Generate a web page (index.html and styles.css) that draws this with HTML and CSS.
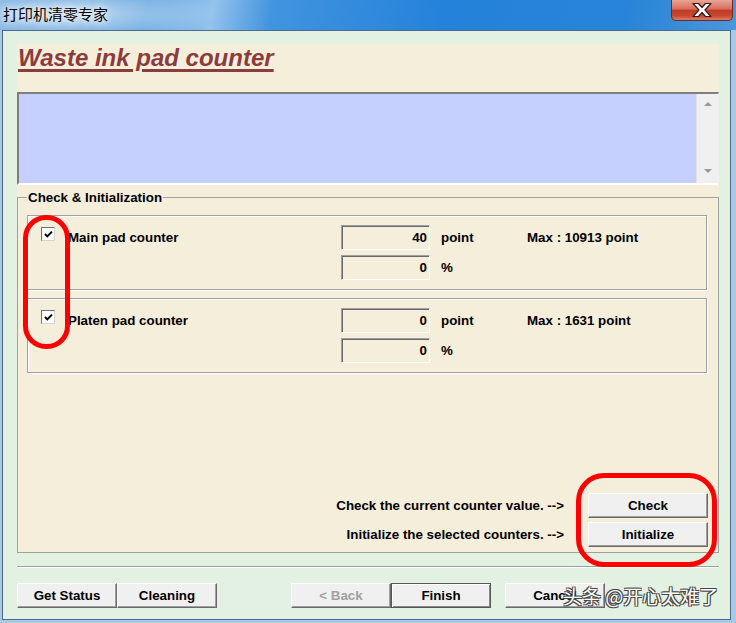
FILE: index.html
```html
<!DOCTYPE html>
<html>
<head>
  <meta charset="UTF-8">
  <title>打印机清零专家</title>
  <link rel="stylesheet" href="styles.css">
</head>
<body>
  <div class="window">
    <div class="titlebar">
      <span class="caption">打印机清零专家</span>
      <a href="javascript:;" class="close">
        <svg width="22" height="16" viewBox="0 0 22 16">
          <path d="M2 1.5 H7.5 L11 5.5 L14.5 1.5 H20 L14 8 L20 14.5 H14.5 L11 10.5 L7.5 14.5 H2 L8 8 Z" fill="#fff" stroke="#3a1a16" stroke-width="1.2" stroke-linejoin="round"/>
        </svg>
      </a>
    </div>
    <div class="client">
      <div class="page">
        <h1 class="heading">Waste ink pad counter</h1>
        <div class="log">
          <div class="log_text"></div>
          <div class="scroll">
            <span class="arrow_up"></span>
            <span class="arrow_down"></span>
          </div>
        </div>
        <fieldset class="group">
          <legend>Check &amp; Initialization</legend>
          <div class="counter">
            <span class="check"><svg width="11" height="11" viewBox="0 0 11 11"><path d="M2 5 L4.3 7.4 L9 2.6" fill="none" stroke="#000" stroke-width="2"/></svg></span>
            <span class="name">Main pad counter</span>
            <span class="field">40</span>
            <span class="unit">point</span>
            <span class="max">Max : 10913 point</span>
            <span class="field field_pct">0</span>
            <span class="unit">%</span>
          </div>
          <div class="counter">
            <span class="check"><svg width="11" height="11" viewBox="0 0 11 11"><path d="M2 5 L4.3 7.4 L9 2.6" fill="none" stroke="#000" stroke-width="2"/></svg></span>
            <span class="name">Platen pad counter</span>
            <span class="field">0</span>
            <span class="unit">point</span>
            <span class="max">Max : 1631 point</span>
            <span class="field field_pct">0</span>
            <span class="unit">%</span>
          </div>
          <div class="actions">
            <div class="action_row">
              <span>Check the current counter value. --&gt;</span>
              <a href="javascript:;" class="btn btn_side">Check</a>
            </div>
            <div class="action_row">
              <span>Initialize the selected counters. --&gt;</span>
              <a href="javascript:;" class="btn btn_side">Initialize</a>
            </div>
          </div>
        </fieldset>
      </div>
      <div class="sep"></div>
      <div class="footer">
        <a href="javascript:;" class="btn">Get Status</a>
        <a href="javascript:;" class="btn">Cleaning</a>
        <a href="javascript:;" class="btn btn_off btn_back">&lt; Back</a>
        <a href="javascript:;" class="btn btn_default">Finish</a>
        <a href="javascript:;" class="btn btn_cancel">Cancel</a>
      </div>
    </div>
    <div class="ring ring_left"></div>
    <div class="ring ring_right"></div>
    <div class="watermark">头条 @开心太难了</div>
  </div>
</body>
</html>
```

FILE: styles.css
```css
* {
  margin: 0;
  padding: 0;
}
body {
  font-family: "Liberation Sans", Arial, sans-serif;
  color: #000;
}
a {
  text-decoration: none;
  color: #000;
}
.window {
  position: relative;
  width: 736px;
  height: 623px;
  background: #aac7e5;
  overflow: hidden;
}
.titlebar {
  height: 30px;
  display: flex;
  justify-content: space-between;
  align-items: flex-start;
  background:
    radial-gradient(ellipse 150px 28px at 70px 14px, rgba(255,255,255,0.6), rgba(255,255,255,0)),
    linear-gradient(100deg, #6fa9de 0%, #62a4e0 20%, #93c2ec 29%, #4194df 37%, #2582da 60%, #2884d8 85%, #4a97db 100%);
}
.caption {
  padding-left: 3px;
  font: 15px/28px "Noto Sans CJK SC", sans-serif;
  color: #000;
  text-shadow: 0 0 6px #fff, 0 0 10px #fff;
}
.close {
  display: flex;
  align-items: center;
  justify-content: center;
  width: 62px;
  height: 21px;
  margin-right: 3px;
  box-sizing: border-box;
  border: 1px solid #6b2a22;
  border-top: none;
  border-radius: 0 0 5px 5px;
  background: linear-gradient(#e7a595 0%, #d86d5a 45%, #c23b26 52%, #c84a33 80%, #df7c5f 100%);
}
.client {
  height: 590px;
  margin: 0 5px 0 2px;
  padding: 13px 11px 0 14px;
  box-sizing: border-box;
  border: 1px solid #4a6a8e;
  background: #e3f1e3;
}
.page {
  height: 509px;
  display: flex;
  flex-direction: column;
  background: #f5eedb;
}
.heading {
  margin-bottom: 20px;
  padding-left: 1px;
  font: italic bold 24px/28px "Liberation Sans", Arial, sans-serif;
  color: #8a3d3d;
  text-decoration: underline;
  text-decoration-thickness: 3px;
  text-underline-offset: 3px;
}
.log {
  display: flex;
  height: 93px;
  box-sizing: border-box;
  border-style: solid;
  border-width: 2px 1px 2px 2px;
  border-color: #7e7e7e #f0f0f0 #fff #7e7e7e;
}
.log_text {
  flex: 1;
  background: #c6d0fe;
}
.scroll {
  width: 21px;
  display: flex;
  flex-direction: column;
  justify-content: space-between;
  align-items: center;
  padding: 8px 0 10px;
  border-left: 1px solid #e3e3e3;
  background: #f0f0f0;
}
.arrow_up {
  border-left: 4px solid transparent;
  border-right: 4px solid transparent;
  border-bottom: 4px solid #9a9a9a;
}
.arrow_down {
  border-left: 4px solid transparent;
  border-right: 4px solid transparent;
  border-top: 4px solid #9a9a9a;
}
.group {
  flex: 1;
  display: flex;
  flex-direction: column;
  min-width: 0;
  margin-top: 5px;
  padding: 10px 10px 5px 9px;
  border: 1px solid #a0a0a0;
}
.group legend {
  padding: 0 1px;
  font-size: 13.33px;
  font-weight: bold;
  line-height: 15px;
}
.counter {
  display: grid;
  grid-template-columns: 27px 273px 100px 86px 1fr;
  grid-template-rows: 25px 25px;
  row-gap: 5px;
  margin-right: 1px;
  padding: 9px 0 9px 13px;
  border: 1px solid #a0a0a0;
  box-shadow: inset 1px 1px 0 #fff, 1px 1px 0 #fff;
  font-size: 13.33px;
  font-weight: bold;
}
.counter + .counter {
  margin-top: 8px;
}
.check {
  align-self: start;
  display: flex;
  align-items: center;
  justify-content: center;
  width: 14px;
  height: 14px;
  margin-top: 2px;
  box-sizing: border-box;
  border: 1px solid;
  border-color: #707070 #d4d4d4 #d4d4d4 #707070;
  background: #fff;
}
.name, .unit, .max {
  align-self: center;
}
.field {
  width: 89px;
  box-sizing: border-box;
  padding-right: 2px;
  border: 1px solid;
  border-color: #a0a0a0 #fff #fff #a0a0a0;
  box-shadow: inset 1px 1px 0 #696969;
  text-align: right;
  line-height: 23px;
}
.field_pct {
  grid-column: 3;
}
.actions {
  margin-top: auto;
  display: flex;
  flex-direction: column;
  align-items: flex-end;
  gap: 4px;
}
.action_row {
  display: flex;
  align-items: center;
  gap: 24px;
  font-size: 13.33px;
  font-weight: bold;
}
.btn {
  display: inline-flex;
  align-items: center;
  justify-content: center;
  width: 100px;
  height: 25px;
  box-sizing: border-box;
  border: 1px solid;
  border-color: #fff #696969 #696969 #fff;
  box-shadow: inset -1px -1px 0 #a0a0a0;
  background: #f0f0f0;
  font-size: 13.33px;
  font-weight: bold;
}
.btn_side {
  width: 120px;
}
.btn_off {
  color: #a0a0a0;
}
.btn_back {
  margin-left: 74px;
}
.btn_default {
  border-color: #555;
  box-shadow: inset 1px 1px 0 #fff, inset -1px -1px 0 #8a8a8a;
}
.btn_cancel {
  margin-left: 14px;
}
.sep {
  margin-top: 13px;
  border-top: 1px solid #a0a0a0;
  border-bottom: 1px solid #fff;
}
.footer {
  display: flex;
  margin-top: 15px;
}
.ring {
  position: absolute;
  box-sizing: border-box;
  border: 5px solid #f00;
}
.ring_left {
  left: 23px;
  top: 215px;
  width: 47px;
  height: 134px;
  border-radius: 23px;
}
.ring_right {
  left: 576px;
  top: 473px;
  width: 141px;
  height: 94px;
  border-radius: 28px;
}
.watermark {
  position: absolute;
  left: 563px;
  top: 584px;
  font: 19px/24px "Noto Sans CJK SC", sans-serif;
  color: #fff;
  white-space: nowrap;
  text-shadow: 1px 1px 0 #444, -1px -1px 0 #444, 1px -1px 0 #444, -1px 1px 0 #444;
}
```
